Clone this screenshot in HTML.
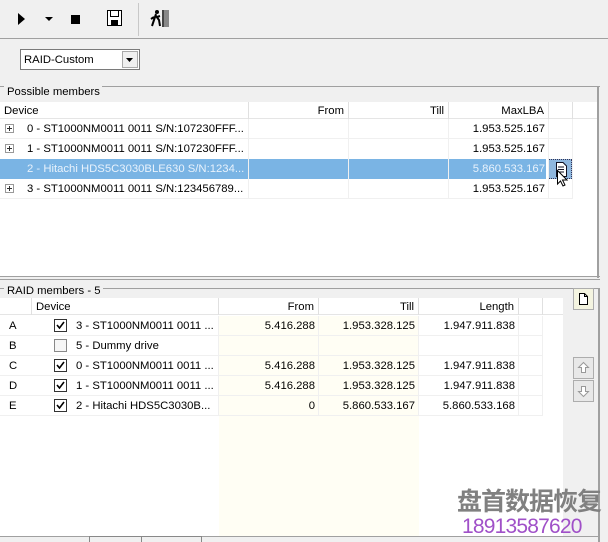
<!DOCTYPE html>
<html><head><meta charset="utf-8"><style>
*{margin:0;padding:0;box-sizing:border-box}
body{width:608px;height:542px;background:#f0f0f0;font-family:"Liberation Sans",sans-serif;font-size:11.3px;color:#000;position:relative;overflow:hidden}
.a{position:absolute}
.t{position:absolute;white-space:nowrap;line-height:20px}
.r{text-align:right}
.hd{position:absolute;background:#fff;border-bottom:1px solid #e5e5e5;height:17px}
.hd div{position:absolute;top:0;height:17px;line-height:18px;border-right:1px solid #e0e0e0;padding:0 4px;white-space:nowrap}
.vl{position:absolute;width:1px;background:#f0f0f0}
.hl{position:absolute;height:1px;background:#f0f0f0}
.cb{position:absolute;width:13px;height:13px;border:1px solid #333;background:#fff}
.pl{position:absolute;width:9px;height:9px;border:1px solid #999;background:#fff}
.pl:before{content:"";position:absolute;left:1px;top:3px;width:5px;height:1px;background:#333}
.pl:after{content:"";position:absolute;left:3px;top:1px;width:1px;height:5px;background:#333}
.btn{position:absolute;width:21px;height:22px;border:1px solid #adadad;background:#e8e8e8}
</style></head><body>
<svg class="a" style="left:0;top:0" width="180" height="38">
<polygon points="18,13 25,19 18,25" fill="#000"/>
<polygon points="45,17 53,17 49,21" fill="#000"/>
<rect x="71" y="15" width="9" height="9" fill="#000"/>
<rect x="107.5" y="10.5" width="14" height="15" fill="#fff" stroke="#000"/>
<rect x="110.5" y="10.5" width="8" height="6" fill="#fff" stroke="#000"/>
<rect x="111" y="20" width="7" height="5" fill="#000"/>
<line x1="138.5" y1="3" x2="138.5" y2="36" stroke="#c8c8c8"/>
<circle cx="157" cy="12" r="2" fill="#000"/>
<path d="M156 14 L154 20 L152 26 M156 16 L159 20 L160 26 M154 17 L151 19 M157 17 L160 16" stroke="#000" stroke-width="2" fill="none"/>
<rect x="162" y="10" width="7" height="17" fill="#888"/>
<line x1="163" y1="10" x2="163" y2="27" stroke="#000"/>
</svg>
<div class="a" style="left:0;top:38px;width:608px;height:1px;background:#a0a0a0"></div>
<div class="a" style="left:20px;top:49px;width:120px;height:21px;border:1px solid #7a7a7a;background:#fff"></div>
<div class="t" style="left:24px;top:50px">RAID-Custom</div>
<div class="a" style="left:122px;top:51px;width:16px;height:17px;border:1px solid #aaa;background:#f0f0f0"></div>
<svg class="a" style="left:125px;top:57px" width="10" height="6"><polygon points="1,1 8,1 4.5,5" fill="#000"/></svg>
<div class="a" style="left:0;top:86px;width:600px;height:1px;background:#a0a0a0"></div>
<div class="t" style="left:4px;top:83px;background:#f0f0f0;padding:0 2px 0 3px;line-height:18px">Possible members</div>
<div class="a" style="left:0;top:102px;width:597px;height:175px;background:#fff"></div>
<div class="a" style="left:597px;top:86px;width:2px;height:192px;background:#a0a0a0"></div>
<div class="hd" style="left:0;top:102px;width:597px">
<div style="left:0;width:249px">Device</div>
<div style="left:249px;width:100px;text-align:right">From</div>
<div style="left:349px;width:100px;text-align:right">Till</div>
<div style="left:449px;width:100px;text-align:right">MaxLBA</div>
<div style="left:549px;width:24px"></div>
</div>
<div class="a" style="left:0;top:159px;width:546px;height:20px;background:#7ab4e4"></div>
<div class="a" style="left:548px;top:159px;width:24px;height:20px;background:#8fb7de;border:1px dotted #335"></div>
<div class="vl" style="left:248px;top:119px;height:80px"></div>
<div class="vl" style="left:348px;top:119px;height:80px"></div>
<div class="vl" style="left:448px;top:119px;height:80px"></div>
<div class="vl" style="left:548px;top:119px;height:80px"></div>
<div class="vl" style="left:572px;top:119px;height:80px"></div>
<div class="hl" style="left:0;top:138px;width:572px"></div>
<div class="hl" style="left:0;top:198px;width:572px"></div>
<div class="pl" style="left:5px;top:124px"></div>
<div class="pl" style="left:5px;top:144px"></div>
<div class="pl" style="left:5px;top:184px"></div>
<div class="t" style="left:27px;top:119px">0 - ST1000NM0011 0011 S/N:107230FFF...</div>
<div class="t" style="left:27px;top:139px">1 - ST1000NM0011 0011 S/N:107230FFF...</div>
<div class="t" style="left:27px;top:159px;color:#e8f2fc">2 - Hitachi HDS5C3030BLE630 S/N:1234...</div>
<div class="t" style="left:27px;top:179px">3 - ST1000NM0011 0011 S/N:123456789...</div>
<div class="t r" style="left:449px;width:96px;top:119px">1.953.525.167</div>
<div class="t r" style="left:449px;width:96px;top:139px">1.953.525.167</div>
<div class="t r" style="left:449px;width:96px;top:159px;color:#e8f2fc">5.860.533.167</div>
<div class="t r" style="left:449px;width:96px;top:179px">1.953.525.167</div>
<svg class="a" style="left:554px;top:161px" width="18" height="26">
<path d="M2.5 1.5 H9 L12.5 5 V15.5 H2.5 Z" fill="#fff" stroke="#112"/>
<path d="M4 6 H10 M4 8.5 H10 M4 11 H10" stroke="#112"/>
<path d="M3.5 9.5 V23 L6.5 20 L9 25 L11 24 L8.5 19 L13 19 Z" fill="#fff" stroke="#000"/>
</svg>
<div class="a" style="left:0;top:276px;width:600px;height:1px;background:#a0a0a0"></div>
<div class="a" style="left:0;top:279px;width:600px;height:1px;background:#a0a0a0"></div>
<div class="a" style="left:0;top:288px;width:600px;height:1px;background:#a0a0a0"></div>
<div class="a" style="left:598px;top:288px;width:2px;height:254px;background:#a0a0a0"></div>
<div class="t" style="left:4px;top:282px;background:#f0f0f0;padding:0 2px 0 3px;line-height:18px">RAID members - 5</div>
<div class="a" style="left:0;top:298px;width:563px;height:238px;background:#fff"></div>
<div class="a" style="left:219px;top:316px;width:200px;height:220px;background:#fffef4"></div>
<div class="hd" style="left:0;top:298px;width:563px">
<div style="left:0;width:32px"></div>
<div style="left:32px;width:187px">Device</div>
<div style="left:219px;width:100px;text-align:right">From</div>
<div style="left:319px;width:100px;text-align:right">Till</div>
<div style="left:419px;width:100px;text-align:right">Length</div>
<div style="left:519px;width:24px"></div>
</div>
<div class="vl" style="left:218px;top:316px;height:100px"></div>
<div class="vl" style="left:318px;top:316px;height:100px"></div>
<div class="vl" style="left:418px;top:316px;height:100px"></div>
<div class="vl" style="left:518px;top:316px;height:100px"></div>
<div class="vl" style="left:542px;top:316px;height:100px"></div>
<div class="hl" style="left:0;top:335px;width:542px"></div>
<div class="hl" style="left:0;top:355px;width:542px"></div>
<div class="hl" style="left:0;top:375px;width:542px"></div>
<div class="hl" style="left:0;top:395px;width:542px"></div>
<div class="hl" style="left:0;top:415px;width:542px"></div>
<div class="t" style="left:9px;top:316px">A</div>
<div class="t" style="left:9px;top:336px">B</div>
<div class="t" style="left:9px;top:356px">C</div>
<div class="t" style="left:9px;top:376px">D</div>
<div class="t" style="left:9px;top:396px">E</div>
<div class="cb" style="left:54px;top:319px"></div>
<div class="cb" style="left:54px;top:339px;border-color:#888;background:#f6f6f6"></div>
<div class="cb" style="left:54px;top:359px"></div>
<div class="cb" style="left:54px;top:379px"></div>
<div class="cb" style="left:54px;top:399px"></div>
<svg class="a" style="left:54px;top:319px" width="13" height="100">
<g fill="none" stroke="#000" stroke-width="1.6"><path d="M3 6 L5.5 9 L10 3"/><path d="M3 46 L5.5 49 L10 43"/><path d="M3 66 L5.5 69 L10 63"/><path d="M3 86 L5.5 89 L10 83"/></g></svg>
<div class="t" style="left:76px;top:316px">3 - ST1000NM0011 0011 ...</div>
<div class="t" style="left:76px;top:336px">5 - Dummy drive</div>
<div class="t" style="left:76px;top:356px">0 - ST1000NM0011 0011 ...</div>
<div class="t" style="left:76px;top:376px">1 - ST1000NM0011 0011 ...</div>
<div class="t" style="left:76px;top:396px">2 - Hitachi HDS5C3030B...</div>
<div class="t r" style="left:219px;width:96px;top:316px">5.416.288</div>
<div class="t r" style="left:219px;width:96px;top:356px">5.416.288</div>
<div class="t r" style="left:219px;width:96px;top:376px">5.416.288</div>
<div class="t r" style="left:219px;width:96px;top:396px">0</div>
<div class="t r" style="left:319px;width:96px;top:316px">1.953.328.125</div>
<div class="t r" style="left:319px;width:96px;top:356px">1.953.328.125</div>
<div class="t r" style="left:319px;width:96px;top:376px">1.953.328.125</div>
<div class="t r" style="left:319px;width:96px;top:396px">5.860.533.167</div>
<div class="t r" style="left:419px;width:96px;top:316px">1.947.911.838</div>
<div class="t r" style="left:419px;width:96px;top:356px">1.947.911.838</div>
<div class="t r" style="left:419px;width:96px;top:376px">1.947.911.838</div>
<div class="t r" style="left:419px;width:96px;top:396px">5.860.533.168</div>
<div class="btn" style="left:573px;top:288px;background:#f4f4e0"></div>
<svg class="a" style="left:573px;top:288px" width="21" height="22"><path d="M6.5 5.5 H11.5 L14.5 8.5 V16.5 H6.5 Z" fill="#fff" stroke="#000"/><path d="M11.5 5.5 V8.5 H14.5" fill="none" stroke="#000"/></svg>
<div class="btn" style="left:573px;top:357px"></div>
<svg class="a" style="left:573px;top:357px" width="21" height="22"><path d="M10.5 5.5 L15.5 10.5 H12.5 V15.5 H8.5 V10.5 H5.5 Z" fill="#fff" stroke="#999"/></svg>
<div class="btn" style="left:573px;top:380px"></div>
<svg class="a" style="left:573px;top:380px" width="21" height="22"><path d="M10.5 16.5 L15.5 11.5 H12.5 V6.5 H8.5 V11.5 H5.5 Z" fill="#fff" stroke="#999"/></svg>
<div class="a" style="left:0;top:536px;width:598px;height:1px;background:#a0a0a0"></div>
<div class="a" style="left:89px;top:536px;width:53px;height:6px;border:1px solid #888;border-bottom:none;background:#f0f0f0"></div>
<div class="a" style="left:141px;top:536px;width:61px;height:6px;border:1px solid #888;border-bottom:none;background:#f0f0f0"></div>
<div class="a" style="left:457px;top:484px;font-family:'Noto Sans CJK SC',sans-serif;font-weight:bold;font-size:25px;color:#808080;line-height:32px;white-space:nowrap;letter-spacing:-1px">盘首数据恢复</div>
<div class="a" style="left:462px;top:514px;font-family:'Liberation Sans',sans-serif;font-size:21px;color:#a050c8;line-height:26px;letter-spacing:-0.8px">18913587620</div>
</body></html>
